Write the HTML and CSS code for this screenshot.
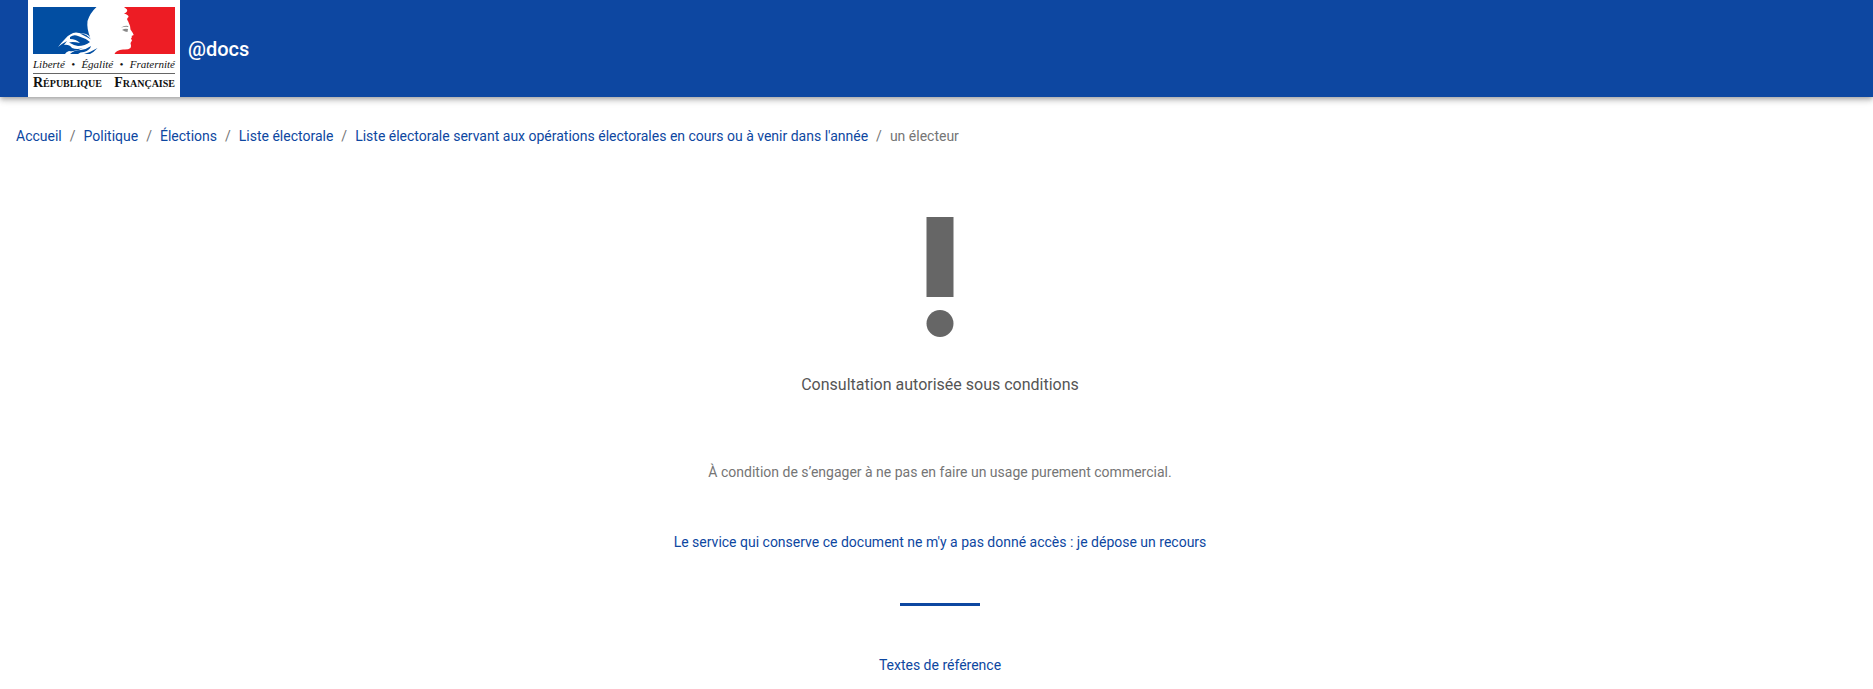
FILE: index.html
```html
<!DOCTYPE html>
<html lang="fr">
<head>
<meta charset="utf-8">
<meta name="viewport" content="width=device-width, initial-scale=1">
<title>@docs</title>
<link rel="stylesheet" href="styles.css">
</head>
<body>
<header class="topbar">
  <div class="logo">
    <svg class="flag" viewBox="0 0 142 47" aria-hidden="true">
      <path fill="#024ea2" d="M0 0H63.500Q57 6 54.500 14Q53.500 22 57.500 31L57 30Q54 26 49 26.500L43 25.500Q37 26 32 32Q28 36 25 40Q30 36 34 34L31 38Q36 37 39 41Q44 43 50 41Q43 45 36 44Q33 45 32 47H0Z"/>
      <path fill="#024ea2" d="M37 30Q41 27 45 29Q52 31 57 35Q52 39 45 39Q40 38 36 35.500Q40 34.500 47 36Q43 32 37 32ZM47 26.500Q53 26 58 32.500Q53 29.500 47 26.500Z"/>
      <path fill="#024ea2" d="M37 47Q41 43 48 43Q54 42 58 39Q57 43 51 45Q47 45 45 47ZM51 47Q58 45 64.500 41Q61 45 57 47Z"/>
      <path fill="#ed1c24" d="M91 0H142V47H81.500Q83 43 90 42.500Q95 43 97.500 41Q98.500 39 97.500 36L99 33.500L98 31.500L99 30L98.500 29L100.700 28Q100 26 97.500 22.500Q97.500 19 95 14Q93 12 95.500 10Q96 8 91 6.500Q95 5 94 2.500Z"/>
      <path fill="#888" d="M88 20.500Q92 18 95 19L95.500 20Q92 19.500 88 20.500ZM89 23Q92 21 95 22L94.500 25L92 24.500Q91 23.500 89 23Z"/>
    </svg>
    <div class="motto"><span>Liberté</span><span>•</span><span>Égalité</span><span>•</span><span>Fraternité</span></div>
    <div class="republic"><span>République</span><span>Française</span></div>
  </div>
  <div class="brand">@docs</div>
</header>
<nav aria-label="Fil d'Ariane">
  <ol class="crumbs">
    <li><a href="#">Accueil</a></li>
    <li><a href="#">Politique</a></li>
    <li><a href="#">Élections</a></li>
    <li><a href="#">Liste électorale</a></li>
    <li><a href="#">Liste électorale servant aux opérations électorales en cours ou à venir dans l'année</a></li>
    <li>un électeur</li>
  </ol>
</nav>
<main class="result">
  <svg class="mark" viewBox="0 0 28 120" aria-hidden="true"><path fill="#666" d="M.5 0h27v80H.5z"/><circle cx="14" cy="106.500" r="13.500" fill="#666"/></svg>
  <h1 class="title">Consultation autorisée sous conditions</h1>
  <p class="condition">À condition de s’engager à ne pas en faire un usage purement commercial.</p>
  <a class="appeal" href="#">Le service qui conserve ce document ne m'y a pas donné accès : je dépose un recours</a>
  <hr class="rule">
  <a href="#">Textes de référence</a>
</main>
</body>
</html>
```
FILE: styles.css
```css
* {
  box-sizing: border-box;
}
body {
  margin: 0;
  background: #fff;
  color: #757575;
  font: 14px/20px Roboto, sans-serif;
}
a {
  color: #0d47a1;
  text-decoration: none;
}
.topbar {
  display: flex;
  align-items: center;
  padding-left: 28px;
  background: #0d47a1;
  box-shadow: 0 2px 4px -1px rgba(0, 0, 0, .2), 0 4px 5px 0 rgba(0, 0, 0, .14), 0 1px 10px 0 rgba(0, 0, 0, .12);
}
.logo {
  width: 152px;
  padding: 7px 5px 5px;
  background: #fff;
  color: #111;
  font-family: "Liberation Serif", serif;
}
.flag {
  display: block;
  width: 142px;
  height: 47px;
}
.motto {
  display: flex;
  justify-content: space-between;
  padding: 2px 0 1px;
  border-bottom: 1px solid #666;
  font-size: 11px;
  font-style: italic;
  line-height: 16px;
}
.republic {
  display: flex;
  justify-content: space-between;
  font-size: 14px;
  font-weight: bold;
  font-variant: small-caps;
  line-height: 18px;
}
.brand {
  padding-left: 8px;
  color: #fff;
  font-size: 20px;
  font-weight: 500;
  line-height: 24px;
}
.crumbs {
  display: flex;
  flex-wrap: wrap;
  margin: 0;
  padding: 29px 16px 0;
  list-style: none;
}
.crumbs li + li::before {
  content: "/";
  padding: 0 8px;
}
.result {
  display: flex;
  flex-direction: column;
  align-items: center;
  padding: 71px 9px 13px 16px;
  text-align: center;
}
.mark {
  width: 28px;
  height: 120px;
}
.title {
  margin: 36px 0 0;
  color: #555;
  font-size: 16px;
  font-weight: 400;
  line-height: 24px;
}
.condition {
  margin: 65px 0 50px;
}
.rule {
  width: 80px;
  height: 3px;
  margin: 51px 0 49px;
  border: 0;
  background: #0d47a1;
}
```
